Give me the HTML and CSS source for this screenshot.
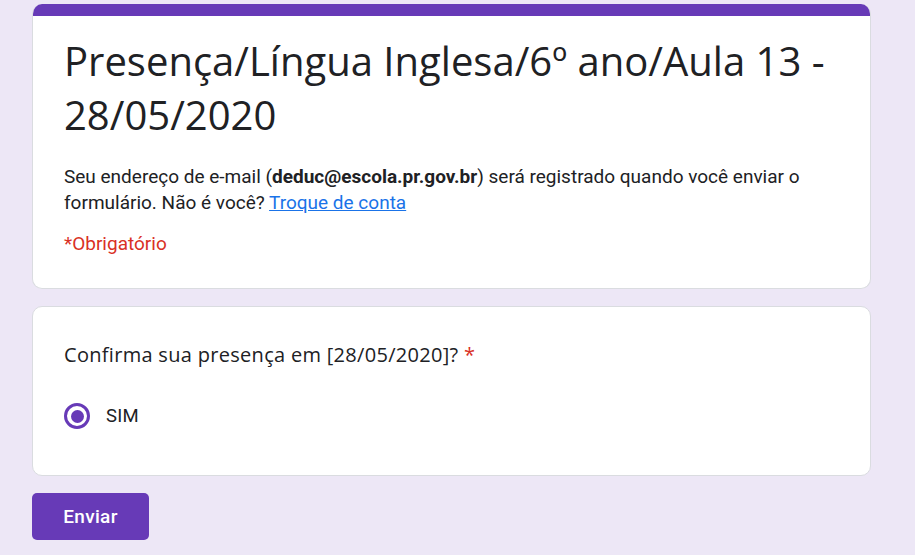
FILE: index.html
```html
<!DOCTYPE html>
<html lang="pt-BR">
<head>
<meta charset="utf-8">
<title>Presença</title>
<link rel="stylesheet" href="styles.css">
</head>
<body>
<main class="page">
  <section class="card header-card">
    <div class="accent"></div>
    <div class="header-body">
      <h1 class="title">Presença/Língua Inglesa/6º ano/Aula 13 - 28/05/2020</h1>
      <p class="info">Seu endereço de e-mail (<b>deduc@escola.pr.gov.br</b>) será registrado quando você enviar o formulário. Não é você? <a href="#" class="link">Troque de conta</a></p>
      <p class="required">*Obrigatório</p>
    </div>
  </section>
  <section class="card question-card">
    <div class="question">Confirma sua presença em [28/05/2020]? <span class="star">*</span></div>
    <label class="option">
      <span class="radio"><span class="dot"></span></span>
      <span class="option-label">SIM</span>
    </label>
  </section>
  <div class="actions">
    <button class="submit" type="button">Enviar</button>
  </div>
</main>
</body>
</html>
```

FILE: styles.css
```css
html, body {
  margin: 0;
  padding: 0;
  background: #ede7f6;
  height: 100%;
}
body {
  font-family: Roboto, "Liberation Sans", sans-serif;
  color: #202124;
}
.page {
  width: 839px;
  margin-left: 32px;
  padding-top: 4px;
  display: flex;
  flex-direction: column;
}
.card {
  background: #fff;
  border: 1px solid #dadce0;
  border-radius: 10px;
  box-sizing: border-box;
}
.header-card {
  overflow: hidden;
  border-top: none;
}
.accent {
  height: 12px;
  background: #673ab7;
}
.header-body {
  padding: 18px 31px 31px 31px;
}
.title {
  margin: 0;
  font-family: "Open Sans", sans-serif;
  font-weight: 400;
  font-size: 40px;
  line-height: 54px;
  color: #202124;
}
.info {
  margin: 22px 0 0 0;
  font-size: 19px;
  line-height: 26px;
  color: #202124;
}
.info b {
  font-weight: 700;
}
.link {
  color: #1a73e8;
  text-decoration: underline;
}
.required {
  margin: 15px 0 0 0;
  font-size: 19px;
  line-height: 26px;
  color: #d93025;
}
.question-card {
  margin-top: 17px;
  padding: 35px 31px 46px 31px;
}
.question {
  font-family: "Open Sans", sans-serif;
  font-size: 20px;
  letter-spacing: 0.3px;
  line-height: 26px;
  color: #202124;
}
.star {
  color: #d93025;
}
.option {
  margin-top: 35px;
  display: flex;
  align-items: center;
  gap: 16px;
  height: 26px;
}
.radio {
  width: 26px;
  height: 26px;
  box-sizing: border-box;
  border: 3px solid #673ab7;
  border-radius: 50%;
  display: flex;
  align-items: center;
  justify-content: center;
}
.dot {
  width: 13px;
  height: 13px;
  border-radius: 50%;
  background: #673ab7;
}
.option-label {
  font-size: 18.5px;
  letter-spacing: 0.3px;
  color: #202124;
}
.actions {
  margin-top: 17px;
}
.submit {
  width: 117px;
  height: 47px;
  background: #673ab7;
  color: #fff;
  border: none;
  border-radius: 5px;
  font-family: Roboto, "Liberation Sans", sans-serif;
  font-weight: 500;
  font-size: 19px;
  letter-spacing: 0.3px;
  padding: 0;
}
```
